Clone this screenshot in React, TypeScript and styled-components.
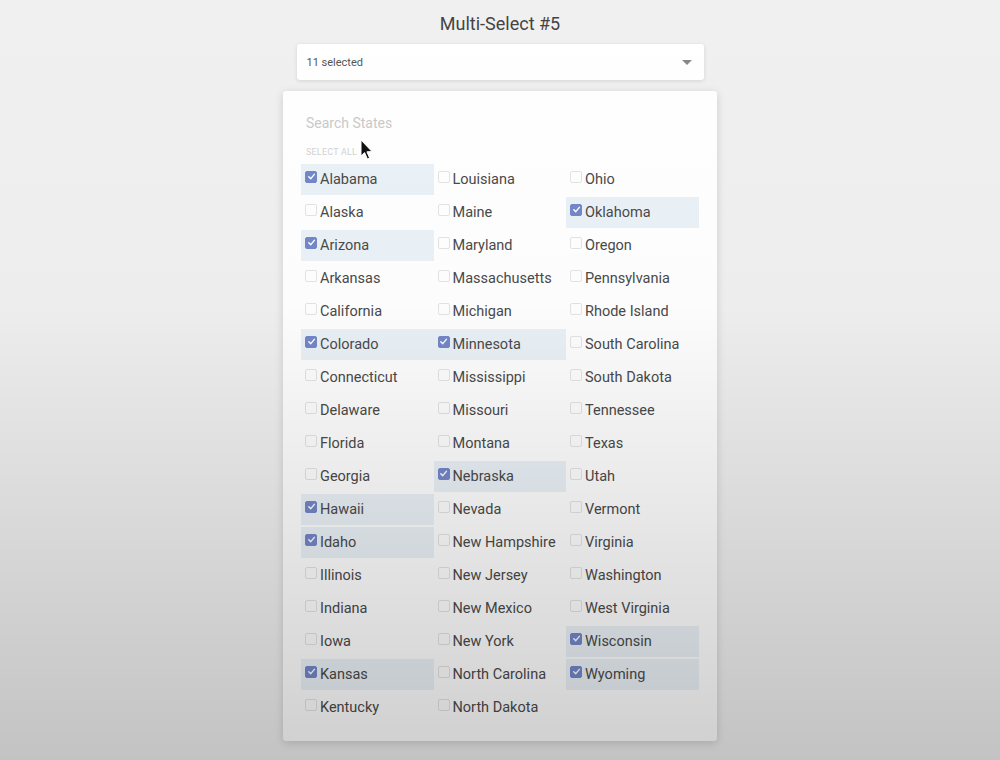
import styled, { createGlobalStyle } from 'styled-components';

const GlobalStyle = createGlobalStyle`
  html, body {
    margin: 0;
    padding: 0;
    background: #f0f0f0;
    font-family: Roboto, "Liberation Sans", Arial, sans-serif;
  }
`;

const STATES = [
  'Alabama', 'Alaska', 'Arizona', 'Arkansas', 'California', 'Colorado', 'Connecticut',
  'Delaware', 'Florida', 'Georgia', 'Hawaii', 'Idaho', 'Illinois', 'Indiana', 'Iowa',
  'Kansas', 'Kentucky', 'Louisiana', 'Maine', 'Maryland', 'Massachusetts', 'Michigan',
  'Minnesota', 'Mississippi', 'Missouri', 'Montana', 'Nebraska', 'Nevada',
  'New Hampshire', 'New Jersey', 'New Mexico', 'New York', 'North Carolina',
  'North Dakota', 'Ohio', 'Oklahoma', 'Oregon', 'Pennsylvania', 'Rhode Island',
  'South Carolina', 'South Dakota', 'Tennessee', 'Texas', 'Utah', 'Vermont',
  'Virginia', 'Washington', 'West Virginia', 'Wisconsin', 'Wyoming',
];

const SELECTED = new Set([
  'Alabama', 'Arizona', 'Colorado', 'Hawaii', 'Idaho', 'Kansas', 'Minnesota',
  'Nebraska', 'Oklahoma', 'Wisconsin', 'Wyoming',
]);

const Page = styled.div`
  width: 1000px;
  height: 760px;
  display: flex;
  flex-direction: column;
  align-items: center;
  position: relative;
  overflow: hidden;
`;

// darkening towards the bottom of the frame, lies over everything
const Vignette = styled.div`
  position: absolute;
  inset: 0;
  pointer-events: none;
  background: linear-gradient(to bottom, rgba(0, 0, 0, 0) 0%, rgba(0, 0, 0, 0.01) 40%, rgba(0, 0, 0, 0.19) 100%);
`;

const Title = styled.h1`
  margin: 12px 0 0;
  font-size: 18px;
  font-weight: 400;
  line-height: 24px;
  color: #444;
`;

const SelectBox = styled.div`
  margin-top: 8px;
  width: 407px;
  height: 36px;
  box-sizing: border-box;
  padding: 0 12px 0 10px;
  background: #fff;
  border-radius: 3px;
  box-shadow: 0 1px 4px rgba(0, 0, 0, 0.12);
  display: flex;
  align-items: center;
  justify-content: space-between;
  font-size: 11px;
  color: #555;
`;

const Caret = styled.span`
  width: 0;
  height: 0;
  border-left: 5px solid transparent;
  border-right: 5px solid transparent;
  border-top: 5px solid #888;
`;

const Panel = styled.div`
  margin-top: 11px;
  width: 434px;
  height: 650px;
  box-sizing: border-box;
  padding: 22px 0 0 18px;
  background: #fff;
  border-radius: 3px;
  box-shadow: 0 2px 8px rgba(0, 0, 0, 0.15);
  display: flex;
  flex-direction: column;
`;

const Search = styled.div`
  margin-left: 5px;
  font-size: 14px;
  line-height: 20px;
  color: #cacaca;
`;

const SelectAll = styled.div`
  margin: 13px 0 0 5px;
  font-size: 9px;
  line-height: 12px;
  letter-spacing: 0.2px;
  color: #d2d2d2;
  text-transform: uppercase;
`;

const Grid = styled.div`
  margin-top: 6px;
  display: grid;
  grid-auto-flow: column;
  grid-template-rows: repeat(17, 31px);
  grid-template-columns: repeat(3, 132.5px);
  row-gap: 2px;
`;

const Cell = styled.label<{ $on: boolean }>`
  display: flex;
  align-items: center;
  gap: 3px;
  padding-left: 4px;
  background: ${(p) => (p.$on ? 'rgba(200, 218, 234, 0.36)' : 'transparent')};
  font-size: 14.5px;
  color: #4a4a4a;
`;

const Box = styled.span<{ $on: boolean }>`
  width: 12px;
  height: 12px;
  margin-top: -6px;
  box-sizing: border-box;
  border-radius: 2px;
  flex-shrink: 0;
  display: flex;
  align-items: center;
  justify-content: center;
  background: ${(p) => (p.$on ? '#7487c9' : '#fff')};
  border: 1px solid ${(p) => (p.$on ? '#7487c9' : '#e4e4e4')};
`;

const Cursor = styled.svg`
  position: absolute;
  left: 360px;
  top: 139px;
`;

function Check() {
  return (
    <svg width="9" height="9" viewBox="0 0 10 10">
      <path d="M2 5.2 L4.2 7.4 L8.2 2.6" fill="none" stroke="#fff" strokeWidth="1.6" strokeLinecap="round" strokeLinejoin="round" />
    </svg>
  );
}

export default function App() {
  return (
    <>
      <GlobalStyle />
      <Page>
        <Title>Multi-Select #5</Title>
        <SelectBox>
          <span>11 selected</span>
          <Caret />
        </SelectBox>
        <Panel>
          <Search>Search States</Search>
          <SelectAll>Select all</SelectAll>
          <Grid>
            {STATES.map((s) => {
              const on = SELECTED.has(s);
              return (
                <Cell key={s} $on={on}>
                  <Box $on={on}>{on && <Check />}</Box>
                  {s}
                </Cell>
              );
            })}
          </Grid>
        </Panel>
        <Cursor width="14" height="22" viewBox="0 0 14 22">
          <path d="M1 1 L1 17 L4.6 13.6 L7.4 20 L9.6 19 L6.9 12.8 L12 12.6 Z" fill="#111" stroke="#fff" strokeWidth="1" />
        </Cursor>
        <Vignette />
      </Page>
    </>
  );
}
